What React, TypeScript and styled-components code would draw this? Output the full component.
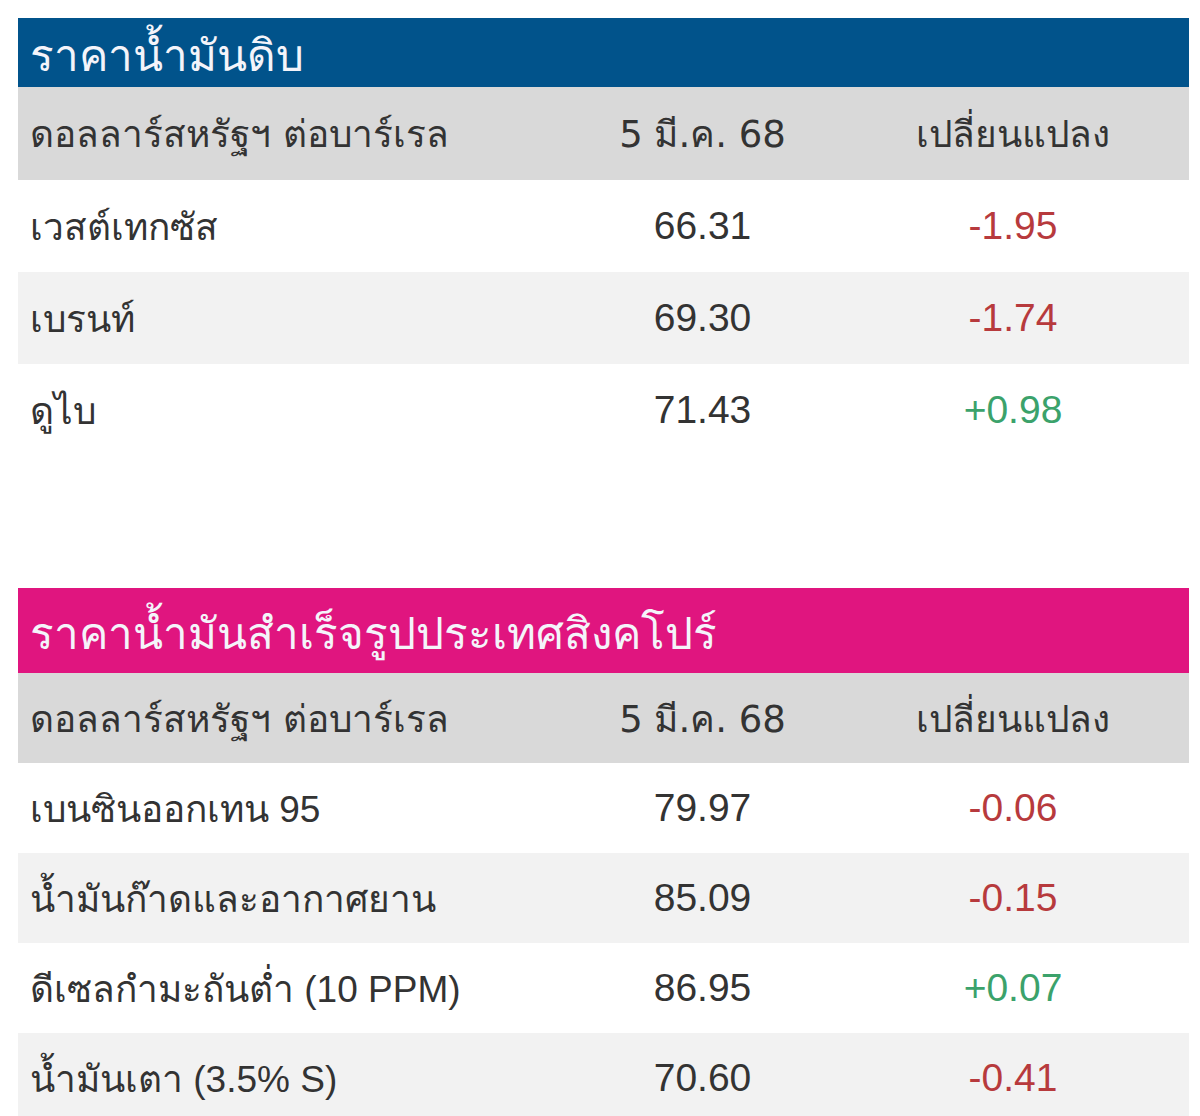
import React from 'react';
import styled, { createGlobalStyle } from 'styled-components';

type Row = { name: string; price: string; change: string };

const crude: Row[] = [
  { name: 'เวสต์เทกซัส', price: '66.31', change: '-1.95' },
  { name: 'เบรนท์', price: '69.30', change: '-1.74' },
  { name: 'ดูไบ', price: '71.43', change: '+0.98' },
];

const refined: Row[] = [
  { name: 'เบนซินออกเทน 95', price: '79.97', change: '-0.06' },
  { name: 'น้ำมันก๊าดและอากาศยาน', price: '85.09', change: '-0.15' },
  { name: 'ดีเซลกำมะถันต่ำ (10 PPM)', price: '86.95', change: '+0.07' },
  { name: 'น้ำมันเตา (3.5% S)', price: '70.60', change: '-0.41' },
];

const PriceTable = ({
  title,
  color,
  titleHeight,
  headHeight,
  rowHeight,
  rows,
}: {
  title: string;
  color: string;
  titleHeight: number;
  headHeight: number;
  rowHeight: number;
  rows: Row[];
}) => (
  <Table>
    <Title $bg={color} $h={titleHeight}>{title}</Title>
    <Grid>
      <HeadCell $h={headHeight}>ดอลลาร์สหรัฐฯ ต่อบาร์เรล</HeadCell>
      <HeadCell $h={headHeight} $center>5 มี.ค. 68</HeadCell>
      <HeadCell $h={headHeight} $center>เปลี่ยนแปลง</HeadCell>
      {rows.map((r, i) => (
        <React.Fragment key={r.name}>
          <Label $h={rowHeight} $odd={i % 2 === 1}>{r.name}</Label>
          <Cell $h={rowHeight} $odd={i % 2 === 1} $center>{r.price}</Cell>
          <Change $h={rowHeight} $odd={i % 2 === 1} $up={r.change.startsWith('+')}>
            {r.change}
          </Change>
        </React.Fragment>
      ))}
    </Grid>
  </Table>
);

export default function App() {
  return (
    <>
      <GlobalStyle />
      <Page>
        <PriceTable
          title="ราคาน้ำมันดิบ"
          color="#01538b"
          titleHeight={69}
          headHeight={93}
          rowHeight={92}
          rows={crude}
        />
        <PriceTable
          title="ราคาน้ำมันสำเร็จรูปประเทศสิงคโปร์"
          color="#e0157f"
          titleHeight={85}
          headHeight={90}
          rowHeight={90}
          rows={refined}
        />
      </Page>
    </>
  );
}

const GlobalStyle = createGlobalStyle`
  body {
    margin: 0;
    background: #fff;
    font-family: Tahoma, "DejaVu Sans", "Liberation Sans", sans-serif;
    color: #333;
  }
`;

const Page = styled.div`
  padding: 18px 0 0 18px;
  display: flex;
  flex-direction: column;
  gap: 132px;
`;

const Table = styled.div`
  width: 1171px;
`;

const Title = styled.div<{ $bg: string; $h: number }>`
  height: ${(p) => p.$h}px;
  background: ${(p) => p.$bg};
  color: #f4f4fa;
  font-size: 44px;
  display: flex;
  align-items: center;
  padding: 4px 12px 0;
  box-sizing: border-box;
  white-space: nowrap;
`;

const Grid = styled.div`
  display: grid;
  grid-template-columns: 550px 269px 352px;
`;

const HeadCell = styled.div<{ $h: number; $center?: boolean }>`
  height: ${(p) => p.$h}px;
  background: #d9d9d9;
  font-size: 37px;
  color: #333;
  display: flex;
  align-items: center;
  justify-content: ${(p) => (p.$center ? 'center' : 'flex-start')};
  padding: 0 12px;
  box-sizing: border-box;
  white-space: nowrap;
`;

const Cell = styled.div<{ $h: number; $odd: boolean; $center?: boolean }>`
  height: ${(p) => p.$h}px;
  background: ${(p) => (p.$odd ? '#f2f2f2' : '#fff')};
  font-family: "Liberation Sans", Tahoma, "DejaVu Sans", sans-serif;
  font-size: 39px;
  color: #333;
  display: flex;
  align-items: center;
  justify-content: ${(p) => (p.$center ? 'center' : 'flex-start')};
  padding: 0 12px;
  box-sizing: border-box;
  white-space: nowrap;
`;

const Label = styled(Cell)`
  font-size: 37px;
`;

const Change = styled(Cell)<{ $up: boolean }>`
  justify-content: center;
  color: ${(p) => (p.$up ? '#3ba26b' : '#b73a3d')};
`;
